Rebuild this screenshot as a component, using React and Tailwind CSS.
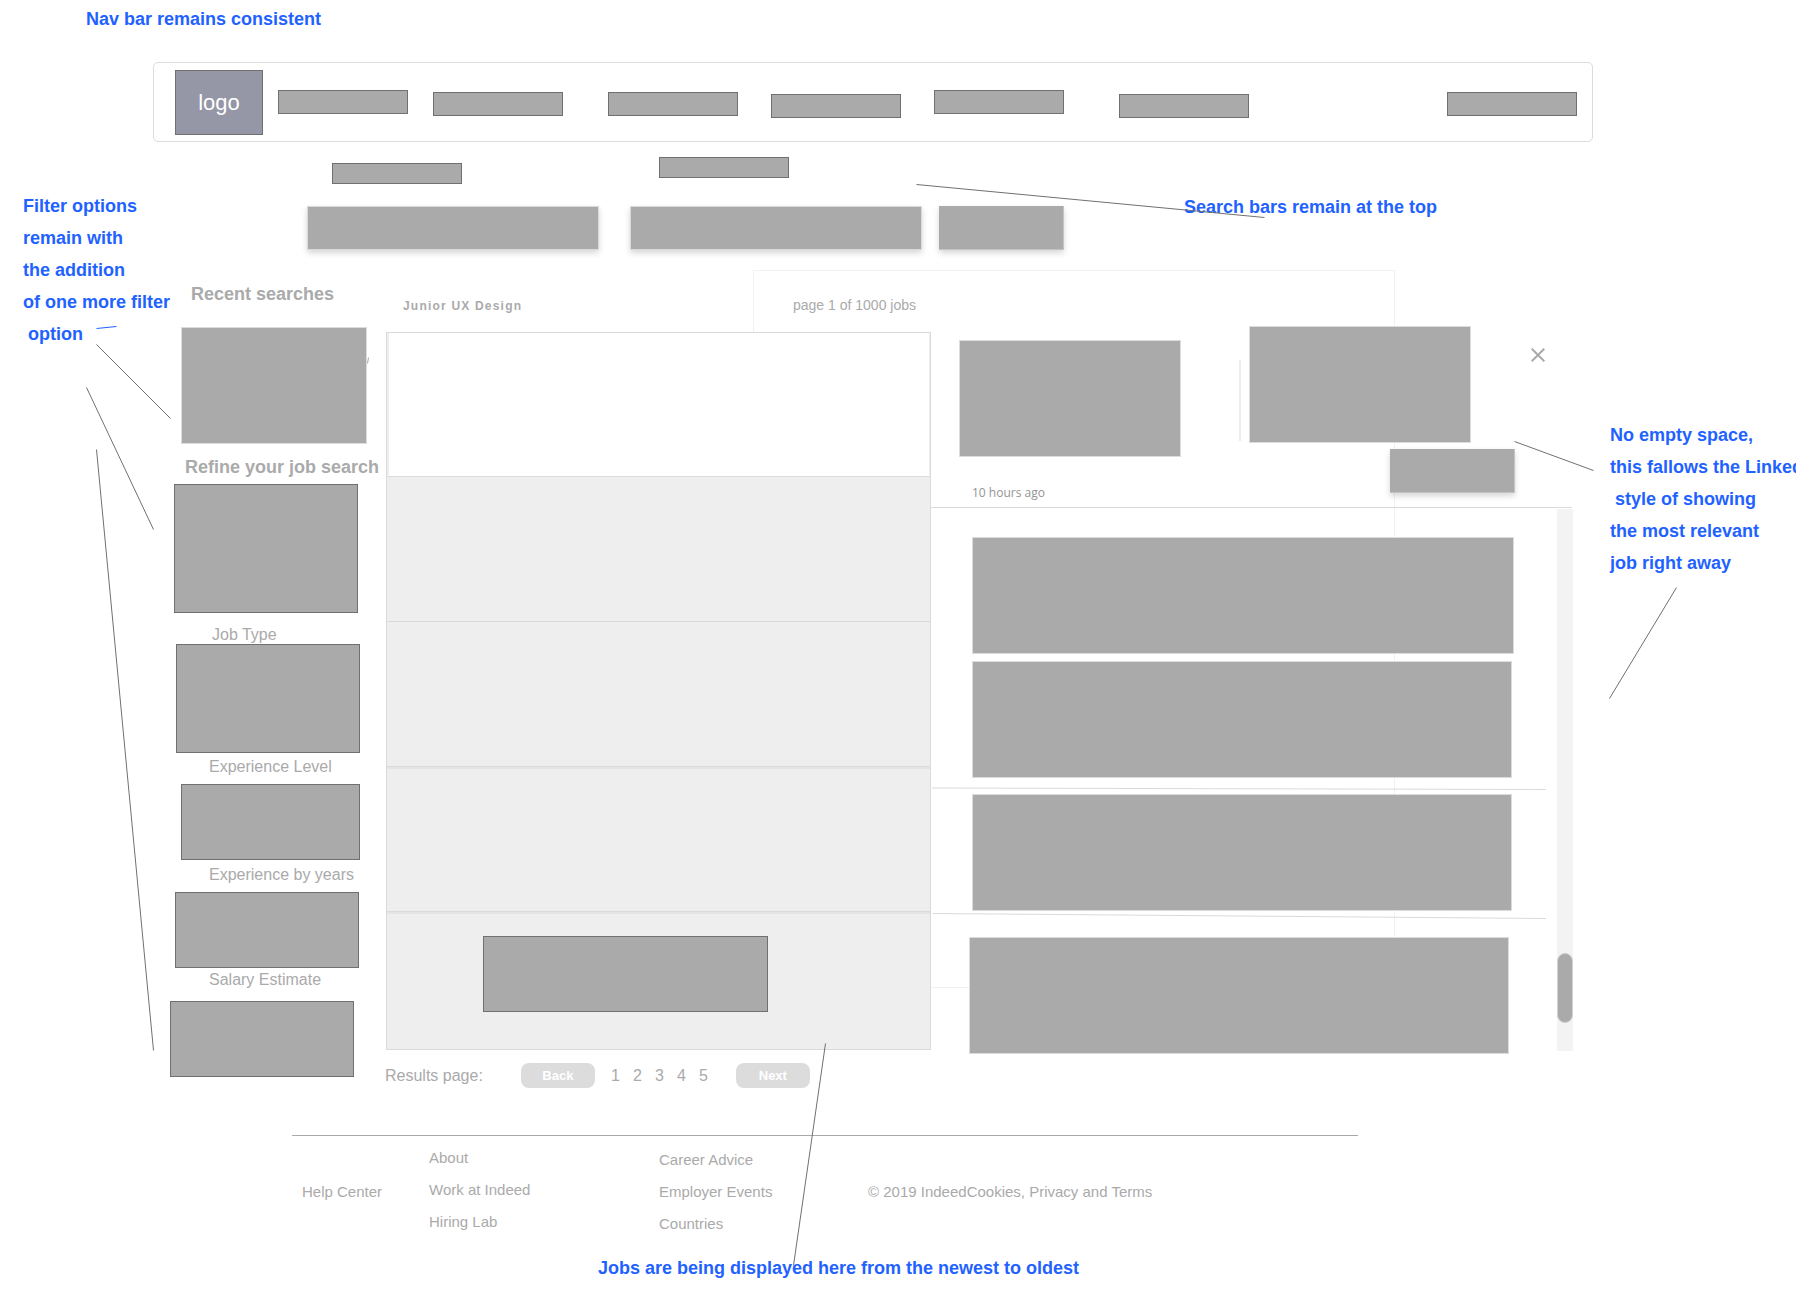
const DARK = "bg-[#aaa] border border-[#707070]";
const SOFT = "bg-[#aaa] border border-[#dcdcdc]";
const RAISED = "bg-[#aaa] border border-[#dadada] shadow-[0_3px_6px_rgba(0,0,0,0.16)]";
const RAISED_BUTTON = "bg-[#aaa] border-r border-b border-[#c4c4c4] shadow-[0_3px_6px_rgba(0,0,0,0.16)]";

const NAV_ITEMS = [
  { name: "Find jobs", place: "ml-[15px] self-start" },
  { name: "Company reviews", place: "ml-[25px] self-center" },
  { name: "Find salaries", place: "ml-[45px] self-center" },
  { name: "Find resumes", place: "ml-[33px] self-end" },
  { name: "Employers", place: "ml-[33px] self-start" },
  { name: "Post job", place: "ml-[55px] self-end" },
  { name: "Sign in", place: "ml-auto self-center" },
];

const FILTERS = [
  { label: "Job Type", text: "pt-3 ml-[59px]", box: "-mt-px ml-[23px] w-[184px] h-[109px]" },
  { label: "Experience Level", text: "pt-1 ml-[56px]", box: "mt-[7px] ml-[28px] w-[179px] h-[76px]" },
  { label: "Experience by years", text: "pt-[5px] ml-[56px]", box: "mt-[7px] ml-[22px] w-[184px] h-[76px]" },
  { label: "Salary Estimate", text: "pt-[2px] ml-[56px]", box: "mt-[11px] ml-[17px] w-[184px] h-[76px]" },
];

function Note({ lines, className = "" }) {
  return (
    <div className={`text-lg leading-8 font-bold text-[#1f62ff] whitespace-pre ${className}`}>
      {lines.map((line) => (
        <p key={line}>{line}</p>
      ))}
    </div>
  );
}

function NavBar() {
  return (
    <nav className="flex h-20 items-start rounded-[5px] border border-[#dcdcdc] py-[7px] pr-[15px] pl-[21px]">
      <a
        href="#home"
        className="flex h-[65px] w-[88px] shrink-0 items-center justify-center border border-[#707070] bg-[#9596a6] text-[22px] text-white"
      >
        logo
      </a>
      <div className="mt-5 flex h-7 flex-1">
        {NAV_ITEMS.map((item) => (
          <a
            key={item.name}
            href="#nav"
            aria-label={item.name}
            className={`h-6 w-[130px] ${DARK} ${item.place}`}
          />
        ))}
      </div>
    </nav>
  );
}

function SearchRow() {
  return (
    <form className="mt-[15px] flex items-end pl-[154px]" onSubmit={(e) => e.preventDefault()}>
      <div className="flex w-[292px] flex-col gap-[22px]">
        <label htmlFor="what" aria-label="What" className={`ml-[25px] h-[21px] w-[130px] ${DARK}`} />
        <input id="what" aria-label="What" className={`h-11 w-full ${RAISED}`} />
      </div>
      <div className="ml-[31px] flex w-[292px] flex-col gap-[28px]">
        <label htmlFor="where" aria-label="Where" className={`ml-[29px] h-[21px] w-[130px] ${DARK}`} />
        <input id="where" aria-label="Where" className={`h-11 w-full ${RAISED}`} />
      </div>
      <button aria-label="Search" className={`ml-[17px] h-11 w-[125px] ${RAISED_BUTTON}`} />
      <Note className="mb-[27px] ml-[120px]" lines={["Search bars remain at the top"]} />
    </form>
  );
}

function Sidebar() {
  return (
    <aside className="flex flex-col whitespace-nowrap text-[#aaa]">
      <h2 className="mt-8 ml-[38px] text-lg leading-6 font-bold">Recent searches</h2>
      <div className={`mt-[21px] ml-[28px] h-[117px] w-[186px] ${SOFT}`} />
      <h2 className="mt-[11px] ml-8 text-lg leading-6 font-bold">Refine your job search</h2>
      <div className={`mt-[5px] ml-[21px] h-[129px] w-[184px] ${DARK}`} />
      {FILTERS.map((f) => (
        <section key={f.label}>
          <h3 className={`text-base leading-5 ${f.text}`}>{f.label}</h3>
          <div className={`${DARK} ${f.box}`} />
        </section>
      ))}
    </aside>
  );
}

function Results() {
  const pageButton = "h-[25px] w-[74px] rounded-lg bg-[#dcdcdc] text-[13px] font-bold text-white";
  return (
    <section className="text-[#aaa]">
      <div className="flex h-[82px] items-baseline justify-between pt-[45px] pr-[15px] pl-[17px]">
        <h1 className="text-xs leading-5 font-bold tracking-widest">Junior UX Design</h1>
        <span className="text-sm leading-5">page 1 of 1000 jobs</span>
      </div>
      <ul className="border border-[#dadada] bg-[#eee]">
        <li className="h-36 border-r border-b border-l-2 border-r-[#eee] border-b-[#dadada] border-l-[#eee] bg-white" />
        <li className="h-[145px] border-b border-[#dadada]" />
        <li className="h-[145px] border-b border-[#dadada]" />
        <li className="h-[145px] border-t-2 border-b border-t-[#e4e4e4] border-b-[#dadada]" />
        <li className="h-[137px] border-t-2 border-[#e4e4e4] pt-[22px] pl-24">
          <div className={`h-[76px] w-[285px] ${DARK}`} />
        </li>
      </ul>
      <nav aria-label="Results pages" className="mt-[13px] -ml-px flex h-[25px] items-center text-base">
        <span>Results page:</span>
        <button className={`ml-[38px] ${pageButton}`}>Back</button>
        <div className="ml-4 flex gap-[13px]">
          {[1, 2, 3, 4, 5].map((n) => (
            <button key={n} className="w-[9px]">
              {n}
            </button>
          ))}
        </div>
        <button className={`ml-7 ${pageButton}`}>Next</button>
      </nav>
    </section>
  );
}

function JobDetail() {
  return (
    <section>
      <header className="mr-[21px] flex border-b border-[#dadada] pt-[76px] pb-[6px]">
        <div className="mt-[14px] ml-[28px] w-[222px]">
          <div className={`h-[117px] ${SOFT}`} />
          <p className="mt-7 ml-[13px] font-['Open_Sans',sans-serif] text-xs leading-4 text-[#949494]">10 hours ago</p>
        </div>
        <div className="ml-[58px] pb-2">
          <div className="flex items-start">
            <div className="mt-[34px] h-[81px] w-[2px] bg-[#ededed]" />
            <div className={`ml-2 h-[117px] w-[222px] ${SOFT}`} />
            <button aria-label="Close" className="mt-[22px] ml-[60px]">
              <svg width="14" height="14" viewBox="0 0 14 14" stroke="#aaa" strokeWidth="2">
                <path d="M0.7 0.7 13.3 13.3M13.3 0.7 0.7 13.3" />
              </svg>
            </button>
          </div>
          <button aria-label="Apply" className={`mt-[6px] ml-[151px] block h-11 w-[125px] ${RAISED_BUTTON}`} />
        </div>
      </header>
      <div className="flex">
        <div className="flex-1">
          <div className={`mt-[29px] mr-[43px] ml-[41px] h-[117px] ${SOFT}`} />
          <div className={`mt-[7px] mr-[45px] ml-[41px] h-[117px] ${SOFT}`} />
          <div className={`mt-4 mr-[45px] ml-[41px] h-[117px] ${SOFT}`} />
          <div className={`mt-[26px] mr-[48px] ml-[38px] h-[117px] ${SOFT}`} />
        </div>
        <div className="mt-px mr-5 h-[542px] w-4 bg-[#f3f3f3] pt-[444px]">
          <div className="h-[70px] w-4 rounded-full border border-[#d0d0d0] bg-[#aaa]" />
        </div>
      </div>
    </section>
  );
}

function FooterLinks({ items, className }) {
  return (
    <ul className={className}>
      {items.map((item) => (
        <li key={item}>
          <a href="#footer">{item}</a>
        </li>
      ))}
    </ul>
  );
}

function Footer() {
  return (
    <footer className="mt-[47px] mr-[235px] ml-[139px] flex items-center border-t border-[#aaa] pt-[6px] pl-[10px] text-[15px] leading-8 text-[#aaa]">
      <FooterLinks className="w-[127px]" items={["Help Center"]} />
      <FooterLinks className="w-[230px] pb-1" items={["About", "Work at Indeed", "Hiring Lab"]} />
      <FooterLinks className="w-[209px]" items={["Career Advice", "Employer Events", "Countries"]} />
      <p>© 2019 IndeedCookies, Privacy and Terms</p>
    </footer>
  );
}

// Pointer lines that connect the notes to the parts of the wireframe.
function Connectors() {
  return (
    <svg
      className="pointer-events-none absolute top-0 left-0"
      width="1796"
      height="1308"
      fill="none"
      stroke="#707070"
      aria-hidden="true"
    >
      <path d="M96.5 344.5 170.5 418.5M86.5 387.5 153.5 529.5M96.5 449.5 153.5 1050.5" />
      <path d="M916.5 184.5 1264.5 217.5" />
      <path d="M1514.5 441.5 1593.5 470.5M1676.5 587.5 1609.5 698.5" />
      <path d="M825.5 1043.5 793.5 1265.5" />
      <path d="M96.5 328.5 116.5 326.5" stroke="#1f62ff" />
      <path d="M368.5 357.5 367.5 363.5" stroke="#aaa" />
      <path d="M932 788 1546 789.5M933 913.5 1546 918.5" stroke="#dadada" />
    </svg>
  );
}

export default function App() {
  return (
    <div className="relative isolate min-h-screen overflow-hidden bg-white font-['Liberation_Sans',Arial,sans-serif]">
      <Note className="pt-[3px] pb-[27px] pl-[86px]" lines={["Nav bar remains consistent"]} />
      <div className="flex">
        <Note
          className="w-[153px] shrink-0 pt-32 pl-[23px]"
          lines={["Filter options", "remain with", "the addition", "of one more filter", " option"]}
        />
        <main className="relative min-w-0 flex-1">
          <div className="absolute top-[208px] left-[600px] -z-10 h-[718px] w-[642px] border border-[#f1f1f1]" />
          <NavBar />
          <SearchRow />
          <div className="grid grid-cols-[233px_minmax(0,545fr)_minmax(0,662fr)]">
            <Sidebar />
            <Results />
            <JobDetail />
          </div>
          <Footer />
          <Note className="mt-[10px] ml-[445px]" lines={["Jobs are being displayed here from the newest to oldest"]} />
        </main>
        <Note
          className="w-[203px] shrink-0 pt-[357px] pl-[17px]"
          lines={["No empty space,", "this fallows the LinkedIn", " style of showing", "the most relevant", "job right away"]}
        />
      </div>
      <Connectors />
    </div>
  );
}
